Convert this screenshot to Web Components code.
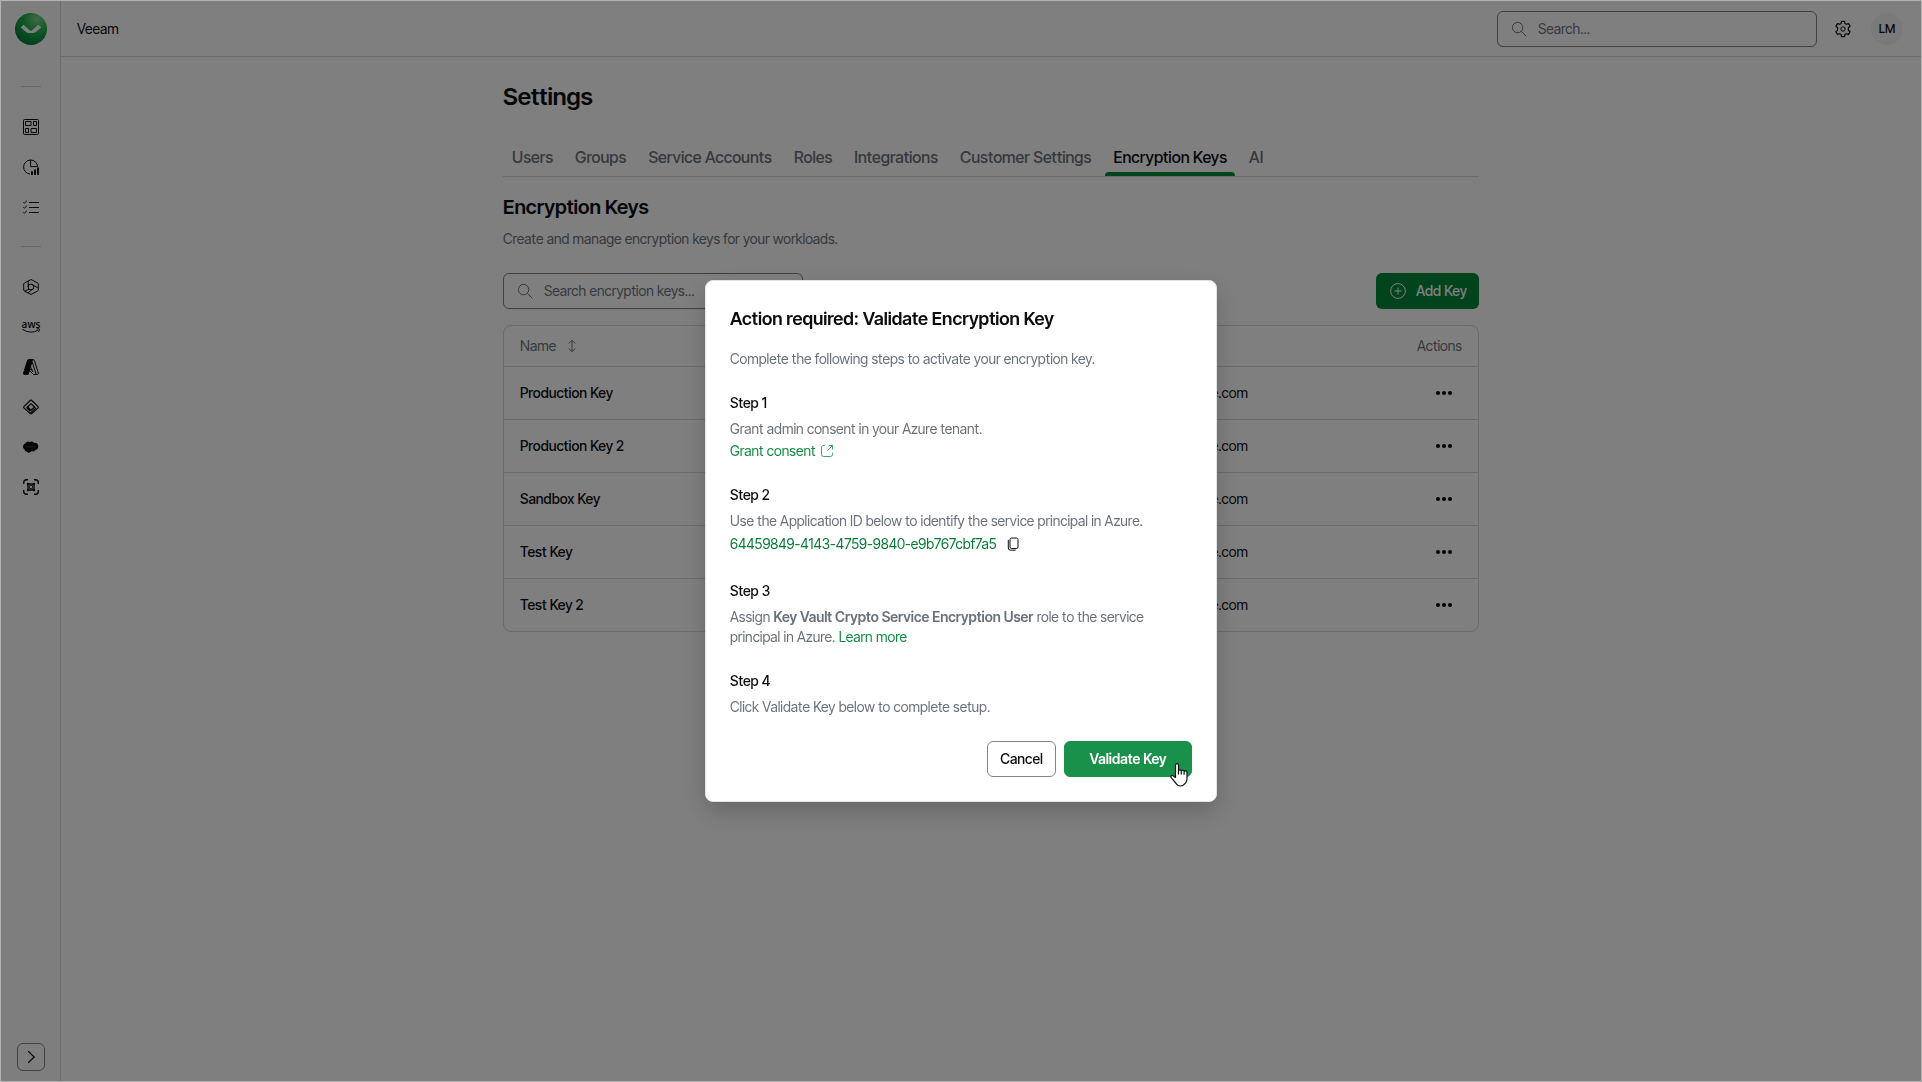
<!DOCTYPE html>
<html lang="en">
<head>
<meta charset="utf-8">
<title>Settings – Encryption Keys</title>
<style>
  :root {
    --text: #0b0c0e; --muted: #6b717b; --line: #d4d6d9; --control: #80858d;
    --brand: #008638; --brand-hover: #19914a; --link: #128c43; --link-strong: #067a35;
  }
  * { box-sizing: border-box; }
  body {
    margin: 0; min-height: 100vh; display: flex; border: 1px solid #b2b2b2; background: #fff; color: var(--text);
    font: 400 14px/20px "Inter Tight", "Inter Display", Inter, "Liberation Sans", sans-serif;
  }
</style>
</head>
<body>
<app-shell></app-shell>
<script>
const ICONS = {
  grid: '<rect x=".5" y=".5" width="15" height="15" rx="1"/><path d="M2.5 2.5H8v4H2.5zM10.5 2.5h3v4h-3zM2.5 9.500h3v4h-3zM8 9.500h5.500v4H8z"/>',
  report: '<path d="M7 15A7 7 0 1 1 14.600 7.600M7.600.6v7h7"/><path d="M9 12.200V16M12 10.400V16M15 8.600V16" stroke-width="1.900"/>',
  tasks: '<path d="M6 3.500h10M6 8.500h10M6 13.500h10M.4 3.200l1 1L3.800 1.800M.4 8.200l1 1 2.400-2.400M.4 13.200l1 1 2.400-2.400"/>',
  workload: '<path d="M8 .5 14.600 4q.7.3.7 1v6q0 .7-.7 1L8 15.500 1.400 12q-.7-.4-.7-1V5q0-.7.7-1z"/><circle cx="8" cy="8" r="2.900"/><path d="M5.200 2v6M6 10.200 1.600 12M8 5.100l6.800 3.600M10.600 9.400 5 13.800"/>',
  azure: '<path d="M5.400.6h4.200L5.200 15.400H1.300a.9.900 0 0 1-.8-1.200L4.600 1.200Q4.800.6 5.400.6z" fill="currentColor"/><path d="M6 .6h4.500q.6 0 .8.6l4.100 13q.2 1-.8 1.200h-4.200L5.400 10.600h4M9.200 3l4 12.400M6.800 6.500 9.800 13"/>',
  entra: '<g stroke-width="1.200" stroke-linejoin="round"><path d="M7.200 1.500q.8-.6 1.600 0l6.300 6.100q.6.700 0 1.300L8.800 14.500q-.8.600-1.600 0L.9 8.900q-.6-.6 0-1.300z"/><path d="M8 4.600 11.500 8 8 11.200 4.500 8zM8 4.600 4.200 8.200q-.6.600 0 1.200l3 2.800M11.500 8l1 1.500L7 14.400"/></g>',
  cloud: '<path d="M2.200 4.600A3 3 0 0 1 6.800 3.200 2.800 2.800 0 0 1 11 3.900a3.500 3.500 0 1 1 1.300 7 2.700 2.700 0 0 1-3.600 1.200 3 3 0 0 1-4.800.6A2.900 2.900 0 0 1 1.400 10.200 3.100 3.100 0 0 1 2.200 4.600z" fill="currentColor" stroke="none"/><path d="M3.200 7.800h9.400" stroke="#fff" stroke-width=".6" stroke-dasharray="1 .5" opacity=".6"/>',
  scan: '<path d="M.7 5V3.500Q.7.700 3.500.7H5M11 .7h1.500q2.800 0 2.800 2.800V5M15.300 11v1.500q0 2.800-2.800 2.800H11M5 15.300H3.500Q.7 15.300.7 12.500V11" stroke-width="1.400"/><path d="M5 5h6v6H5z" stroke-width="1.300"/><circle cx="8" cy="8" r="1.900"/><circle cx="5" cy="5" r="1.200" fill="currentColor" stroke="none"/><circle cx="11" cy="5" r="1.200" fill="currentColor" stroke="none"/><circle cx="5" cy="11" r="1.200" fill="currentColor" stroke="none"/><circle cx="11" cy="11" r="1.200" fill="currentColor" stroke="none"/>',
  search: '<circle cx="6.600" cy="6.600" r="5.200"/><path d="m10.400 10.400 5 5"/>',
  gear: '<circle cx="8" cy="8" r="2.200"/><path d="M6.500.3h3l.4 2.200 1.400.8 2.200-.7 1.600 2.600-1.700 1.600v2.400l1.700 1.600-1.600 2.600-2.200-.7-1.400.8-.4 2.200h-3l-.4-2.200-1.400-.8-2.200.7-1.600-2.600 1.700-1.600V6.800L.9 5.200l1.600-2.600 2.200.7 1.400-.8z" stroke-width="1.200" stroke-linejoin="round"/>',
  plus: '<circle cx="8" cy="8" r="7.400"/><path d="M8 4.500v7M4.500 8h7"/>',
  sort: '<path d="M8 2.500v11M4.800 5.500 8 2.300l3.200 3.200M4.800 10.500 8 13.700l3.200-3.200"/>',
  dots: '<g fill="currentColor" stroke="none"><circle cx="2" cy="8" r="2.100"/><circle cx="8" cy="8" r="2.100"/><circle cx="14" cy="8" r="2.100"/></g>',
  chevron: '<path d="m5.200 2.200 6 5.800-6 5.800" stroke-width="1.200"/>',
  external: '<path d="M6.200 2.500H4.500a2 2 0 0 0-2 2v7a2 2 0 0 0 2 2h7a2 2 0 0 0 2-2V9.800M9.600 2.500h3.900v3.900M13.500 2.500 8.400 7.600" opacity=".8"/>',
  copy: '<rect x="5" y="2" width="8" height="10.500" rx="1.600"/><path d="M3.300 3.800v8.200a2.200 2.200 0 0 0 2.200 2.200h5.200"/>',
};

function define(name, markup) {
  customElements.define(name, class extends HTMLElement {
    connectedCallback() {
      if (this.shadowRoot) return;
      const t = document.createElement('template');
      t.innerHTML = '<style>*{box-sizing:border-box}button,input{font:inherit;color:inherit}h1,h2,h3,p{margin:0;font-weight:600}</style>'
        + (typeof markup === 'function' ? markup(this) : markup);
      this.attachShadow({ mode: 'open' }).append(t.content.cloneNode(true));
    }
  });
}

define('ui-icon', el => `
  <style>:host{display:block;width:16px;height:16px;flex:none} svg{display:block;width:100%;height:100%;overflow:visible}</style>
  <svg viewBox="0 0 16 16" fill="none" stroke="currentColor" stroke-width="1" aria-hidden="true">${ICONS[el.getAttribute('name')]}</svg>`);

define('brand-logo', `
  <style>:host{display:block;width:32px;height:32px} svg{display:block}</style>
  <svg width="32" height="32" viewBox="0 0 32 32" role="img" aria-label="Home">
    <defs><radialGradient id="g" cx=".68" cy=".2" r=".85"><stop offset="0" stop-color="#7ed68c"/><stop offset=".45" stop-color="#20b050"/><stop offset="1" stop-color="#007a34"/></radialGradient></defs>
    <circle cx="16" cy="16" r="16" fill="url(#g)"/>
    <path d="M5.800 14.600 8.600 11.800l6 5.500q1.200 1 2.600 0l6-5.500 3 2.800-5.900 4.700q-1.100.8-2.300.8h-4.300q-1.200 0-2.200-.8z" fill="#fff"/>
  </svg>`);

define('aws-mark', `
  <style>:host{display:block;width:18px;height:16px} svg{display:block;overflow:visible} text{font:600 10px/1 "Open Sans","Noto Sans",sans-serif}</style>
  <svg width="18" height="16" viewBox="0 0 18 16" fill="none" stroke="currentColor"><text x="9" y="8.500" text-anchor="middle" fill="currentColor" stroke="none">aws</text><path d="M.4 10.400q8 5 16 .8M14.600 10q2.800-.6 3 .2.100 1.200-1 2.600"/></svg>`);

define('side-nav', `
  <style>
    :host{display:flex;flex-direction:column;align-items:center;width:60px;flex:none;padding:12px 0 10px;border-right:1px solid var(--line);background:#fdfdfd}
    nav{display:flex;flex-direction:column;align-items:center;margin-top:22px}
    hr{width:20px;height:1px;border:0;margin:19px 0 20px;background:#cdcfd2}
    a{display:grid;place-items:center;width:40px;height:40px;color:inherit}
    button{display:grid;place-items:center;width:28px;height:28px;margin-top:auto;padding:0;border:1px solid var(--control);border-radius:6px;background:none}
  </style>
  <brand-logo></brand-logo>
  <nav aria-label="Main">
    <hr>
    <a href="#dashboard" aria-label="Dashboard"><ui-icon name="grid"></ui-icon></a>
    <a href="#reports" aria-label="Reports"><ui-icon name="report"></ui-icon></a>
    <a href="#tasks" aria-label="Tasks"><ui-icon name="tasks"></ui-icon></a>
    <hr>
    <a href="#m365" aria-label="Microsoft 365"><ui-icon name="workload"></ui-icon></a>
    <a href="#aws" aria-label="AWS"><aws-mark></aws-mark></a>
    <a href="#azure" aria-label="Azure"><ui-icon name="azure"></ui-icon></a>
    <a href="#entra" aria-label="Entra ID"><ui-icon name="entra"></ui-icon></a>
    <a href="#salesforce" aria-label="Salesforce"><ui-icon name="cloud"></ui-icon></a>
    <a href="#vault" aria-label="Vault"><ui-icon name="scan"></ui-icon></a>
  </nav>
  <button aria-label="Expand menu"><ui-icon name="chevron"></ui-icon></button>`);

define('search-field', el => `
  <style>
    :host{display:block}
    label{display:flex;align-items:center;gap:11px;height:36px;padding:0 13px;border:1px solid var(--control);border-radius:6px;color:var(--muted);background:#fff;box-shadow:0 1px 2px #0000000d}
    input{flex:1;min-width:0;padding:0;border:0;outline:0;background:none}
    input::placeholder{color:var(--muted);opacity:1}
  </style>
  <label><ui-icon name="search"></ui-icon><input type="search" placeholder="${el.getAttribute('placeholder')}" aria-label="${el.getAttribute('label')}"></label>`);

define('top-bar', `
  <style>
    :host{display:flex;align-items:center;gap:10px;height:56px;padding:0 18px 0 16px;border-bottom:1px solid var(--line)}
    .org{margin-right:auto}
    search-field{width:320px}
    .tools{display:flex;align-items:center;gap:12px}
    button{display:grid;place-items:center;width:32px;height:32px;padding:0;border:0;border-radius:16px;background:none}
    .me{background:#f5f5f6;font-size:12px;font-weight:500}
  </style>
  <span class="org">Veeam</span>
  <search-field placeholder="Search..." label="Search"></search-field>
  <div class="tools"><button aria-label="Settings"><ui-icon name="gear"></ui-icon></button><button class="me">LM</button></div>`);

define('tab-bar', el => `
  <style>
    :host{display:block}
    nav{display:flex;gap:6px;height:40px;padding-left:1px;border-bottom:1px solid var(--line)}
    a{display:flex;padding:10px 8px 0;color:var(--muted);font-size:16px;line-height:20px;font-weight:500;text-decoration:none;white-space:nowrap}
    a[aria-current]{position:relative;color:var(--text)}
    a[aria-current]::after{content:"";position:absolute;left:0;right:0;bottom:0;height:4px;border-radius:4px 4px 0 0;background:var(--brand)}
  </style>
  <nav aria-label="Settings sections">${el.getAttribute('tabs').split(',').map(t => `<a href="#"${t === el.getAttribute('current') ? ' aria-current="page"' : ''}>${t}</a>`).join('')}</nav>`);

define('ui-button', el => `
  <style>
    :host{display:block}
    button{display:flex;align-items:center;justify-content:center;gap:10px;width:100%;height:36px;padding:0 12px;border:1px solid var(--control);border-radius:6px;background:#fff;font-weight:500;white-space:nowrap}
    :host([kind=primary]) button{border:0;padding:0 12px 0 14px;background:var(--brand);color:#fff}
    :host([kind=hover]) button{border-color:var(--brand-hover);background:var(--brand-hover);color:#fff;font-weight:600}
  </style>
  <button type="button"><slot name="icon"></slot><slot></slot></button>`);

define('keys-table', el => `
  <style>
    :host{display:block;border:1px solid var(--line);border-radius:8px;overflow:hidden}
    table{width:100%;border-collapse:separate;border-spacing:0;table-layout:fixed}
    th,td{height:53px;padding:0 16px;text-align:left;border-top:1px solid var(--line)}
    th{height:40px;border:0;color:var(--muted);font-weight:400}
    td:first-child{font-weight:500}
    .owner{width:236px} .act{width:214px}
    th:last-child,td:last-child,td:nth-child(2){text-align:right}
    th button{display:flex;align-items:center;gap:8px;padding:0;border:0;background:none}
    td button{padding:8px;border:0;background:none;margin-right:2px;vertical-align:middle}
  </style>
  <table>
    <colgroup><col><col class="owner"><col class="act"></colgroup>
    <thead><tr><th><button>Name<ui-icon name="sort"></ui-icon></button></th><th></th><th>Actions</th></tr></thead>
    <tbody>${el.getAttribute('names').split(',').map(n => `<tr><td>${n}</td><td>e.com</td><td><button aria-label="Actions for ${n}"><ui-icon name="dots"></ui-icon></button></td></tr>`).join('')}</tbody>
  </table>`);

define('settings-page', `
  <style>
    :host{display:block;padding:24px 16px}
    .inner{max-width:976px;margin:0 auto}
    h1{font-size:24px;line-height:32px}
    h2{font-size:20px;line-height:28px}
    tab-bar{margin:24px 0 16px}
    p{margin:8px 0 24px;color:var(--muted);font-weight:400}
    .bar{display:flex;justify-content:space-between;margin-bottom:16px}
    search-field{width:300px}
  </style>
  <div class="inner">
    <h1>Settings</h1>
    <tab-bar tabs="Users,Groups,Service Accounts,Roles,Integrations,Customer Settings,Encryption Keys,AI" current="Encryption Keys"></tab-bar>
    <h2>Encryption Keys</h2>
    <p>Create and manage encryption keys for your workloads.</p>
    <div class="bar">
      <search-field placeholder="Search encryption keys..." label="Search encryption keys"></search-field>
      <ui-button kind="primary"><ui-icon slot="icon" name="plus"></ui-icon>Add Key</ui-button>
    </div>
    <keys-table names="Production Key,Production Key 2,Sandbox Key,Test Key,Test Key 2"></keys-table>
  </div>`);

define('modal-step', el => `
  <style>
    :host{display:block;margin-top:24px}
    h3{font-size:14px;line-height:20px;font-weight:500;margin-bottom:6px}
    div{color:var(--muted)}
  </style>
  <h3>${el.getAttribute('heading')}</h3><div><slot></slot></div>`);

define('validate-dialog', `
  <style>
    :host{position:fixed;inset:1px;display:flex;align-items:center;justify-content:center;background:#00000080}
    dialog{position:relative;width:512px;max-width:100%;margin:0;padding:24px;border:1px solid #e2e5e8;border-radius:8px;background:#fff;color:var(--text);box-shadow:0 10px 24px #00000030}
    h2{font-size:18px;line-height:28px}
    .lead{margin-top:16px;color:var(--muted);font-weight:400}
    a{color:var(--link);text-decoration:none}
    .row{display:flex;align-items:center;gap:4px}
    .consent{margin-top:2px}
    .id{color:var(--link-strong);padding:1px 0}
    .id button{display:grid;place-items:center;width:24px;height:24px;padding:0;border:0;background:none;color:var(--text)}
    b{font-weight:600}
    footer{display:flex;justify-content:flex-end;gap:8px;margin-top:24px}
    .ok{width:128px}
    .pointer{position:absolute;right:28px;bottom:14px}
  </style>
  <dialog open aria-labelledby="t">
    <h2 id="t">Action required: Validate Encryption Key</h2>
    <p class="lead">Complete the following steps to activate your encryption key.</p>
    <modal-step heading="Step 1">Grant admin consent in your Azure tenant.
      <div class="row consent"><a href="#consent">Grant consent</a><a href="#consent" aria-label="Open in new tab"><ui-icon name="external"></ui-icon></a></div></modal-step>
    <modal-step heading="Step 2">Use the Application ID below to identify the service principal in Azure.
      <div class="row id"><span>64459849-4143-4759-9840-e9b767cbf7a5</span><button aria-label="Copy"><ui-icon name="copy"></ui-icon></button></div></modal-step>
    <modal-step heading="Step 3">Assign <b>Key Vault Crypto Service Encryption User</b> role to the service<br>principal in Azure. <a href="#learn">Learn more</a></modal-step>
    <modal-step heading="Step 4">Click Validate Key below to complete setup.</modal-step>
    <footer><ui-button>Cancel</ui-button><ui-button class="ok" kind="hover">Validate Key</ui-button></footer>
    <svg class="pointer" width="18" height="24" viewBox="0 0 18 24" fill="#fff" stroke="#111" stroke-width="1.200" stroke-linejoin="round" aria-hidden="true">
      <path d="M5.500 14.500V2.200a1.500 1.500 0 0 1 3 0V8a1.400 1.400 0 0 1 2.800.4 1.400 1.400 0 0 1 2.800.6 1.400 1.400 0 0 1 2.900.6V16q0 2.400-1.500 4.200Q13.200 23 10.500 23 7.500 23 5.700 20L1.200 14.600q-.8-1.200.1-1.900 1-.6 2 .2z"/><path d="M8.500 8v3.600M11.300 8.600v3M14.100 9.200v2.600" fill="none"/>
    </svg>
  </dialog>`);

define('app-shell', `
  <style>
    :host{display:flex;flex:1;min-width:0}
    main{flex:1;min-width:0}
  </style>
  <side-nav></side-nav>
  <main><top-bar></top-bar><settings-page></settings-page></main>
  <validate-dialog></validate-dialog>`);
</script>
</body>
</html>
